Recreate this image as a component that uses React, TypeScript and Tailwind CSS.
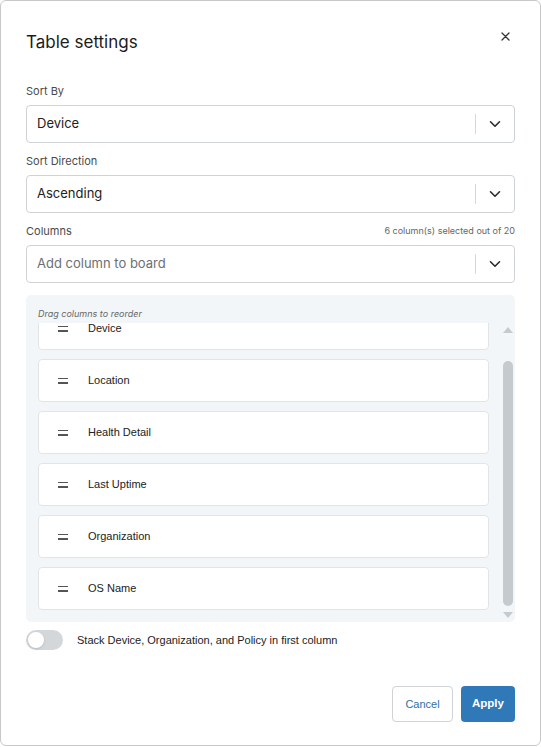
import React from "react";

const columns = ["Device", "Location", "Health Detail", "Last Uptime", "Organization", "OS Name"];

function Chevron() {
  return (
    <svg width="14" height="14" viewBox="0 0 14 14" fill="none" stroke="#2b2b2b" strokeWidth="1.6" strokeLinecap="round" strokeLinejoin="round">
      <path d="M2.5 4.75 7 9.25l4.5-4.5" />
    </svg>
  );
}

function Select({ value, placeholder }: { value?: string; placeholder?: string }) {
  return (
    <div className="h-[38px] flex items-center border border-[#cfd3d7] rounded-[4px] bg-white">
      <div className={`flex-1 pl-[10px] text-[13px] ${value ? "text-[#222]" : "text-[#6b6f74]"}`}>
        {value ?? placeholder}
      </div>
      <div className="w-px h-[20px] bg-[#d6d9dc]" />
      <div className="w-[38px] flex justify-center">
        <Chevron />
      </div>
    </div>
  );
}

function Handle() {
  return (
    <div className="w-[10px] flex flex-col gap-[3px]">
      <div className="h-[1.5px] bg-[#555]" />
      <div className="h-[1.5px] bg-[#555]" />
    </div>
  );
}

export default function App() {
  return (
    <div className="w-[541px] h-[747px] bg-white" style={{ fontFamily: "Inter, 'Noto Sans', sans-serif" }}>
      <div className="h-[746px] border border-[#c8c8c8] rounded-[6px] px-[25px] pt-[27px] flex flex-col">
        {/* Header */}
        <div className="flex items-start justify-between h-[28px]">
          <h1 className="text-[17px] leading-[28px] font-normal text-[#1b1b1b]">Table settings</h1>
          <button className="mt-[4px] mr-[5px]">
            <svg width="9" height="9" viewBox="0 0 9 9" stroke="#333" strokeWidth="1.3" strokeLinecap="round">
              <path d="M1 1l7 7M8 1 1 8" />
            </svg>
          </button>
        </div>

        <div className="mt-[27px] text-[11px] leading-[16px] text-[#4a4a4a]">Sort By</div>
        <div className="mt-[6px]">
          <Select value="Device" />
        </div>

        <div className="mt-[10px] text-[11px] leading-[16px] text-[#4a4a4a]">Sort Direction</div>
        <div className="mt-[6px]">
          <Select value="Ascending" />
        </div>

        <div className="mt-[10px] flex items-center justify-between text-[#4a4a4a]">
          <span className="text-[11px] leading-[16px]">Columns</span>
          <span className="text-[9px] leading-[16px] text-[#666]">6 column(s) selected out of 20</span>
        </div>
        <div className="mt-[6px]">
          <Select placeholder="Add column to board" />
        </div>

        {/* Drag panel */}
        <div className="mt-[12px] h-[327px] bg-[#f3f6f8] rounded-[5px] pl-[12px] pr-[2px] pt-[14px] pb-[4px] flex flex-col">
          <div className="text-[9px] leading-[10px] italic text-[#666]">Drag columns to reorder</div>
          <div className="flex-1 flex gap-[14px] min-h-0 mt-[4px]">
            <div className="flex-1 overflow-hidden" style={{ fontFamily: "'Liberation Sans', Arial, sans-serif" }}>
              <div className="-mt-[16px] flex flex-col gap-[9px]">
                {columns.map((c) => (
                  <div key={c} className="h-[43px] shrink-0 bg-white border border-[#e1e5e8] rounded-[4px] flex items-center pl-[19px] gap-[20px]">
                    <Handle />
                    <span className="text-[11px] text-[#222]">{c}</span>
                  </div>
                ))}
              </div>
            </div>
            <div className="w-[10px] flex flex-col items-center">
              <div className="mt-[4px] w-0 h-0 border-l-[5px] border-r-[5px] border-b-[6px] border-l-transparent border-r-transparent border-b-[#c5cacf]" />
              <div className="mt-[28px] flex-1 w-[10px] rounded-full bg-[#c5cacf]" />
              <div className="mt-[6px] w-0 h-0 border-l-[5px] border-r-[5px] border-t-[6px] border-l-transparent border-r-transparent border-t-[#c5cacf]" />
            </div>
          </div>
        </div>

        {/* Toggle */}
        <div className="mt-[8px] flex items-center gap-[14px]">
          <div className="w-[37px] h-[20px] rounded-full bg-[#d4d7da] flex items-center px-[2px]">
            <div className="w-[16px] h-[16px] rounded-full bg-white shadow-sm" />
          </div>
          <span className="text-[11px] text-[#222]" style={{ fontFamily: "'Liberation Sans', Arial, sans-serif" }}>
            Stack Device, Organization, and Policy in first column
          </span>
        </div>

        {/* Footer */}
        <div className="mt-[36px] flex justify-end gap-[8px]" style={{ fontFamily: "'Liberation Sans', Arial, sans-serif" }}>
          <button className="h-[36px] w-[61px] border border-[#cfd3d7] rounded-[4px] bg-white text-[11px] text-[#2f6fa8]">
            Cancel
          </button>
          <button className="h-[36px] w-[54px] rounded-[4px] bg-[#3079b8] text-[11.5px] font-bold text-white">
            Apply
          </button>
        </div>
      </div>
    </div>
  );
}
